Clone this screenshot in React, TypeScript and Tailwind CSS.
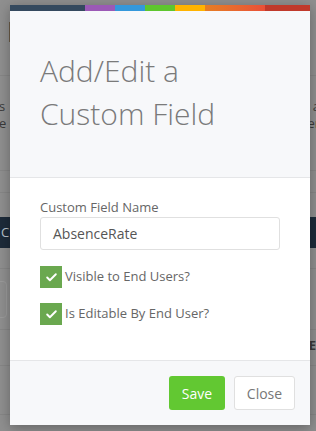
import { Check } from "lucide-react";

const bars = [
  { w: "w-[75px]", c: "bg-[#34495e]" },
  { w: "w-[30px]", c: "bg-[#9b59b6]" },
  { w: "w-[30px]", c: "bg-[#3498db]" },
  { w: "w-[30px]", c: "bg-[#5ec62e]" },
  { w: "w-[30px]", c: "bg-[#ffb300]" },
  { w: "w-[60px]", c: "bg-gradient-to-r from-[#e67e22] to-[#e94f37]" },
  { w: "flex-1", c: "bg-[#c0392b]" },
];

function CheckRow({ label }: { label: string }) {
  return (
    <label className="flex items-center gap-[3px]">
      <span className="flex h-[22px] w-[22px] items-center justify-center bg-[#6aa84f]">
        <Check className="h-[13px] w-[13px] text-white" strokeWidth={3.5} />
      </span>
      <span className="text-[13px] text-[#666]">{label}</span>
    </label>
  );
}

export default function App() {
  return (
    <div
      className="relative h-[431px] w-[316px] overflow-hidden bg-[#8f8f8f]"
      style={{ fontFamily: '"Open Sans", "Liberation Sans", sans-serif' }}
    >
      {/* dimmed page behind */}
      <div className="flex flex-col text-[13px] text-[#3a3a3a]">
        <div className="h-[76px] border-b border-[#868686]">
          <div className="ml-[9px] mt-[22px] h-[20px] w-[2px] bg-[#6b5b48]" />
        </div>
        <div className="flex h-[95px] justify-between border-b border-[#868686] pt-[22px] leading-[17px]">
          <div className="-ml-[1px]">
            s<br />e c
          </div>
          <div className="-mr-[4px] text-right">
            a<br />er
          </div>
        </div>
        <div className="h-[22px] border-b border-[#868686]" />
        <div className="h-[24px]" />
        <div className="flex h-[31px] items-center bg-[#1d2b3a] pl-[1px] text-[#b9c2cc]">Cu</div>
        <div className="h-[21px] border-b border-[#868686]" />
        <div className="flex h-[61px] items-center border-b border-[#868686]">
          <div className="-ml-[4px] h-[37px] w-[11px] rounded border border-[#9a9a9a]" />
        </div>
        <div className="flex h-[36px] items-end justify-end border-b border-[#868686] pb-[10px] font-bold">
          E
        </div>
        <div className="h-[49px] border-b border-[#868686]" />
      </div>

      {/* modal */}
      <div className="absolute left-[10px] top-[5px] flex w-[300px] flex-col shadow-[0_3px_12px_rgba(0,0,0,0.3)]">
        <div className="flex h-[6px]">
          {bars.map((b, i) => (
            <div key={i} className={`${b.w} ${b.c}`} />
          ))}
        </div>
        <div className="border-b border-[#e5e6e8] bg-[#f7f8fa] pb-[42px] pl-[30px] pt-[38px]">
          <h1 className="text-[30px] font-light leading-[43px] text-[#7a7a7a]">
            Add/Edit a<br />Custom Field
          </h1>
        </div>
        <div className="flex flex-col bg-white px-[30px] pb-[35px] pt-[20px]">
          <label className="mb-[1px] text-[13px] leading-[18px] text-[#666]">Custom Field Name</label>
          <div className="flex h-[33px] w-[240px] items-center rounded-[3px] border border-[#e0e0e0] pl-[12px] text-[14px] text-[#555]">
            AbsenceRate
          </div>
          <div className="mt-[16px] flex flex-col gap-[15px]">
            <CheckRow label="Visible to End Users?" />
            <CheckRow label="Is Editable By End User?" />
          </div>
        </div>
        <div className="flex justify-end gap-[9px] border-t border-[#e5e6e8] bg-[#f7f8fa] py-[15px] pr-[15px]">
          <button className="h-[34px] w-[56px] rounded-[3px] bg-[#62c832] text-[14px] text-white">Save</button>
          <button className="h-[34px] w-[61px] rounded-[3px] border border-[#e0e0e0] bg-white text-[14px] text-[#777]">
            Close
          </button>
        </div>
      </div>
    </div>
  );
}
